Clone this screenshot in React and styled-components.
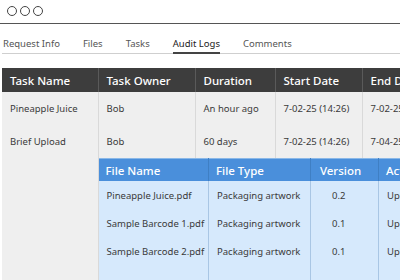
import React from 'react'
import styled, { createGlobalStyle } from 'styled-components'

const GlobalStyle = createGlobalStyle`
  html, body {
    margin: 0;
    padding: 0;
    background: #ffffff;
    overflow: hidden;
  }
  body {
    font-family: 'Noto Sans', 'DejaVu Sans', sans-serif;
    color: #333333;
  }
`

const tasks = [
  { name: 'Pineapple Juice', owner: 'Bob', duration: 'An hour ago', start: '7-02-25 (14:26)', end: '7-02-25 (14:26)' },
  { name: 'Brief Upload', owner: 'Bob', duration: '60 days', start: '7-02-25 (14:26)', end: '7-04-25 (14:26)' },
]

const files = [
  { name: 'Pineapple Juice.pdf', type: 'Packaging artwork', version: '0.2', action: 'Uploaded' },
  { name: 'Sample Barcode 1.pdf', type: 'Packaging artwork', version: '0.1', action: 'Uploaded' },
  { name: 'Sample Barcode 2.pdf', type: 'Packaging artwork', version: '0.1', action: 'Uploaded' },
]

const tabs = ['Request Info', 'Files', 'Tasks', 'Audit Logs', 'Comments']

const App = () => (
  <Page>
    <GlobalStyle />
    <TitleBar>
      <Dot />
      <Dot />
      <Dot />
    </TitleBar>
    <Tabs>
      {tabs.map(t => (
        <Tab key={t} active={t === 'Audit Logs'}>{t}</Tab>
      ))}
    </Tabs>
    <Table>
      <colgroup>
        <col style={{ width: 96 }} />
        <col style={{ width: 97 }} />
        <col style={{ width: 80 }} />
        <col style={{ width: 87 }} />
        <col style={{ width: 90 }} />
      </colgroup>
      <thead>
        <tr>
          <Th>Task Name</Th>
          <Th>Task Owner</Th>
          <Th>Duration</Th>
          <Th>Start Date</Th>
          <Th>End Date</Th>
        </tr>
      </thead>
      <tbody>
        {tasks.map(t => (
          <tr key={t.name}>
            <Td>{t.name}</Td>
            <Td>{t.owner}</Td>
            <Td>{t.duration}</Td>
            <Td>{t.start}</Td>
            <Td>{t.end}</Td>
          </tr>
        ))}
        <tr>
          <Td />
          <NestCell colSpan={4}>
            <FileTable>
              <colgroup>
                <col style={{ width: 110 }} />
                <col style={{ width: 102 }} />
                <col style={{ width: 68 }} />
                <col style={{ width: 80 }} />
              </colgroup>
              <thead>
                <tr>
                  <FileTh>File Name</FileTh>
                  <FileTh>File Type</FileTh>
                  <FileTh center>Version</FileTh>
                  <FileTh>Action</FileTh>
                </tr>
              </thead>
              <tbody>
                {files.map(f => (
                  <tr key={f.name}>
                    <FileTd>{f.name}</FileTd>
                    <FileTd>{f.type}</FileTd>
                    <FileTd center>{f.version}</FileTd>
                    <FileTd>{f.action}</FileTd>
                  </tr>
                ))}
                <tr>
                  <FileTd />
                  <FileTd />
                  <FileTd />
                  <FileTd />
                </tr>
              </tbody>
            </FileTable>
          </NestCell>
        </tr>
      </tbody>
    </Table>
  </Page>
)

export default App

const Page = styled.div`
  width: 400px;
  height: 280px;
  overflow: hidden;
`

const TitleBar = styled.div`
  display: flex;
  gap: 3px;
  align-items: center;
  height: 22px;
  padding: 0 0 1px 7px;
  border-bottom: 1.5px solid #555555;
`

const Dot = styled.span`
  box-sizing: border-box;
  width: 10px;
  height: 10px;
  border: 1.3px solid #444444;
  border-radius: 50%;
`

const Tabs = styled.div`
  display: flex;
  gap: 23px;
  margin: 13px 0 0 2px;
  padding-left: 1px;
  border-bottom: 1px solid #cfcfcf;
`

const Tab = styled.div`
  font-size: 9.5px;
  line-height: 14px;
  padding-bottom: 1px;
  color: ${p => (p.active ? '#222222' : '#555555')};
  border-bottom: 2px solid ${p => (p.active ? '#444444' : 'transparent')};
  margin-bottom: -1px;
`

const Table = styled.table`
  border-collapse: collapse;
  table-layout: fixed;
  width: 450px;
  margin: 14px 0 0 2px;
  background: #efefef;
`

const Th = styled.th`
  background: #3d3d3d;
  color: #ffffff;
  font-size: 11.5px;
  font-weight: 500;
  text-align: left;
  height: 24px;
  padding: 0 8px;
  white-space: nowrap;
  border-right: 1px solid #5a5a5a;
`

const Td = styled.td`
  font-size: 9.5px;
  color: #3a3a3a;
  height: 33px;
  padding: 0 8px;
  white-space: nowrap;
  border-right: 1px solid #d9d9d9;
  vertical-align: middle;
`

const NestCell = styled.td`
  padding: 0;
  vertical-align: top;
`

const FileTable = styled.table`
  border-collapse: collapse;
  table-layout: fixed;
  width: 360px;
  background: #d6e9fc;
  border-top: 1px solid #8ab8e8;
`

const FileTh = styled.th`
  background: #4a8fdb;
  color: #ffffff;
  font-size: 11.5px;
  font-weight: 500;
  height: 22px;
  padding: 0 8px 0 ${p => (p.center ? '0' : '7px')};
  text-align: ${p => (p.center ? 'center' : 'left')};
  white-space: nowrap;
  border-right: 1px solid #3f7fc4;
`

const FileTd = styled.td`
  font-size: 9.5px;
  color: #3a3a3a;
  height: 28px;
  padding: 0 0 0 ${p => (p.center ? '21px' : '8px')};
  white-space: nowrap;
  overflow: hidden;
  border-right: 1px solid #a9c6e4;
`
